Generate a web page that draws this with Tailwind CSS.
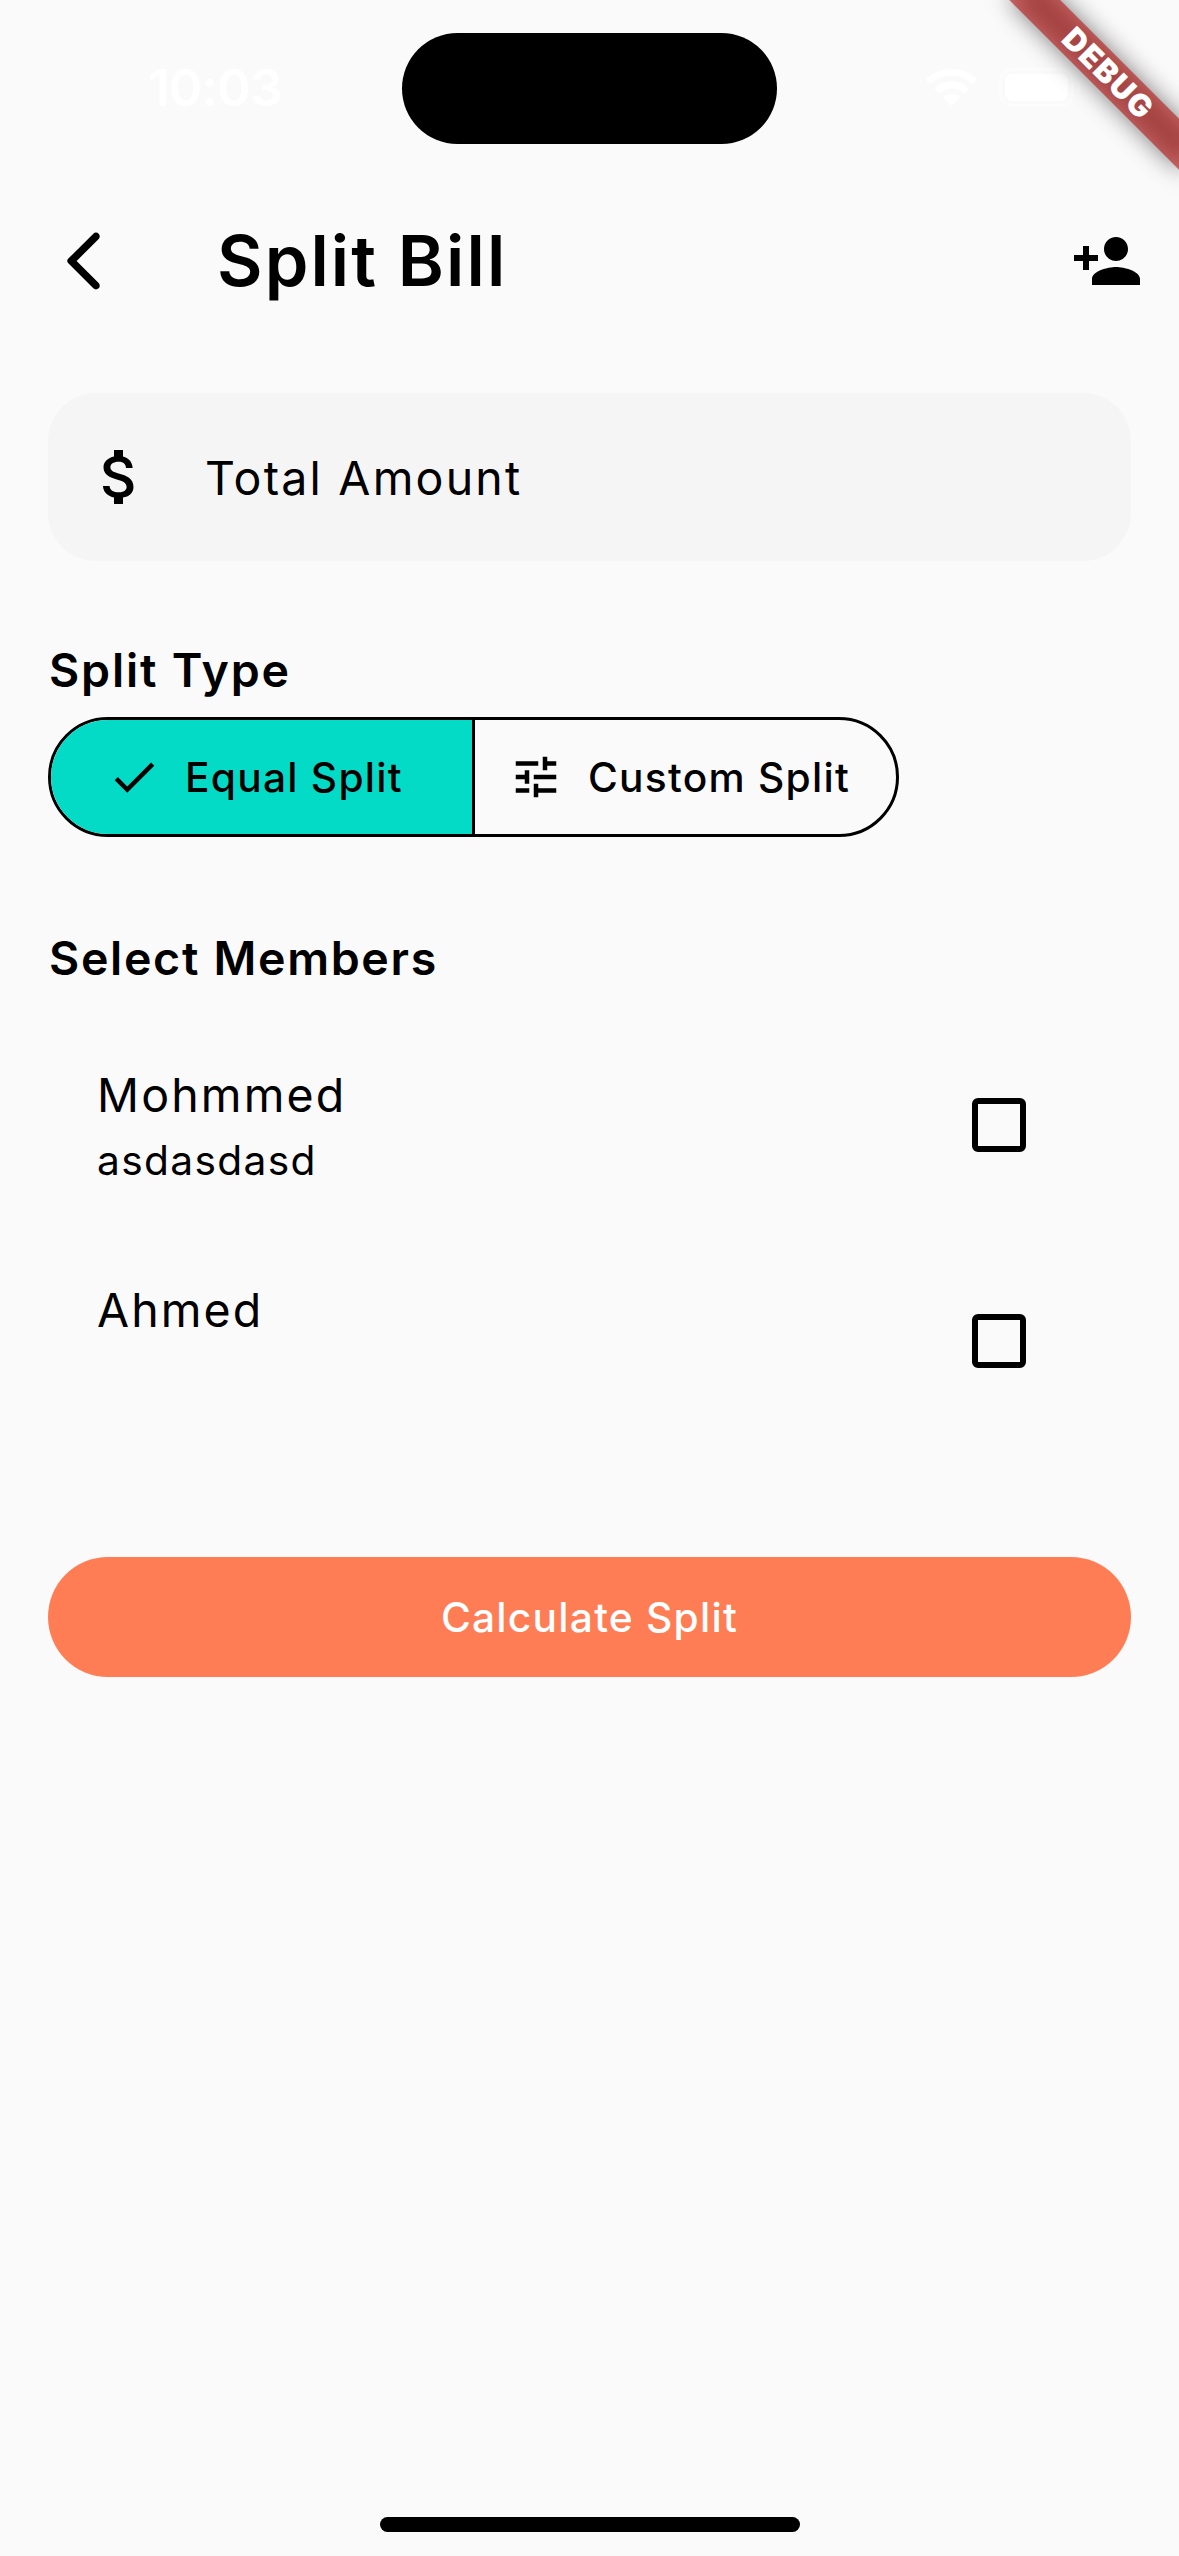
<!DOCTYPE html>
<html lang="en">
<head>
<meta charset="utf-8">
<title>Split Bill</title>
<script src="https://cdn.jsdelivr.net/npm/@tailwindcss/browser@4"></script>
</head>
<body class="bg-[#fafafa]">
<div class="relative flex h-[2556px] w-[1179px] flex-col overflow-hidden bg-[#fafafa] font-['Inter',sans-serif] text-black">

  <!-- Status bar -->
  <div class="flex h-[177px] items-start">
    <div class="mt-[57px] ml-[148px] w-[254px] text-[51px] leading-[61px] font-semibold tracking-[-0.8px] text-white">10:03</div>
    <div class="mt-[33px] h-[111px] w-[375px] rounded-full bg-black"></div>
    <svg class="mt-[69px] ml-[149px] h-[37px] w-[51px]" viewBox="0 0 51 37" fill="#fff">
      <path d="M25.5 0C35.5 0 44 3.6 50.4 9.6c.6.6.6 1.4.1 2l-2.7 2.7c-.5.5-1.3.5-1.9 0C40.3 9.4 33.3 6.7 25.5 6.7S10.7 9.4 5.1 14.3c-.6.5-1.4.5-1.9 0L.5 11.6c-.5-.6-.5-1.4.1-2C7 3.6 15.5 0 25.5 0z"/>
      <path d="M25.5 12.6c6.3 0 11.9 2.2 16.1 6.2.6.6.6 1.3 0 1.9l-3 3c-.5.5-1.2.5-1.8 0-3-2.7-6.9-4.3-11.3-4.3s-8.3 1.600-11.3 4.300c-.6.500-1.300.5-1.800 0l-3-3c-.6-.6-.6-1.300 0-1.900 4.200-4 9.800-6.200 16.100-6.200z"/>
      <path d="M25.5 25c2.9 0 5.4 1 7.400 2.600.6.500.6 1.200.1 1.800l-6.500 6.700c-.6.600-1.400.6-2 0L18 29.400c-.5-.6-.5-1.300.1-1.800 2-1.600 4.500-2.600 7.400-2.600z"/>
    </svg>
    <svg class="mt-[68px] ml-[22px] h-[39px] w-[83px]" viewBox="0 0 83 39" fill="none">
      <rect x="1.5" y="1.5" width="72" height="36" rx="11.5" stroke="#fff" stroke-opacity=".4" stroke-width="3"/>
      <rect x="6" y="6" width="63" height="27" rx="7.5" fill="#fff"/>
      <path d="M78 13.5v12c2.4-1 4-3.300 4-6s-1.600-5-4-6z" fill="#fff" fill-opacity=".5"/>
    </svg>
  </div>

  <!-- App bar -->
  <header class="flex h-[168px] items-center pr-9 pl-12">
    <svg class="size-[72px]" viewBox="0 0 24 24"><path d="M16.880 2.880c-.49-.49-1.280-.49-1.770 0L6.700 11.290c-.39.390-.39 1.020 0 1.410l8.410 8.410c.49.490 1.280.490 1.770 0s.49-1.280 0-1.770L9.540 12l7.350-7.350c.48-.49.480-1.280-.01-1.770z"/></svg>
    <h1 class="ml-[97px] flex-1 text-[70px] leading-[84px] font-[560] tracking-[2.1px]">Split Bill</h1>
    <svg class="size-[72px]" viewBox="0 0 24 24"><path d="M15 12c2.210 0 4-1.790 4-4s-1.790-4-4-4-4 1.790-4 4 1.790 4 4 4zm-9-2V7H4v3H1v2h3v3h2v-3h3v-2H6zm9 4c-2.670 0-8 1.340-8 4v2h16v-2c0-2.660-5.330-4-8-4z"/></svg>
  </header>

  <main class="flex flex-col px-12 pt-12">
    <!-- Amount field -->
    <div class="flex h-[168px] items-center rounded-[48px] bg-[#f5f5f5] pl-9">
      <svg class="size-[72px]" viewBox="0 0 24 24"><path d="M11.800 10.900c-2.270-.59-3-1.200-3-2.150 0-1.090 1.010-1.850 2.700-1.850 1.780 0 2.440.850 2.500 2.100h2.210c-.07-1.720-1.120-3.300-3.210-3.810V3h-3v2.160c-1.940.420-3.500 1.680-3.500 3.610 0 2.310 1.910 3.460 4.700 4.130 2.500.600 3 1.480 3 2.410 0 .690-.49 1.790-2.700 1.790-2.060 0-2.870-.92-2.980-2.100h-2.200c.12 2.190 1.760 3.420 3.680 3.830V21h3v-2.150c1.950-.37 3.500-1.500 3.500-3.550 0-2.840-2.430-3.810-4.700-4.400z"/></svg>
      <span class="mt-0.5 ml-[49px] text-[46.5px] leading-[60px] font-[370] tracking-[2.2px]">Total Amount</span>
    </div>

    <!-- Split type -->
    <h2 class="mt-[73px] ml-px text-[46.5px] leading-[72px] font-[560] tracking-[1.85px]">Split Type</h2>
    <div class="mt-[11px] flex h-[120px] w-[851px] overflow-hidden rounded-full border-3 border-black text-[40.7px] leading-[54px] font-medium tracking-[1.25px]">
      <div class="flex w-[424px] items-center gap-6 border-r-3 border-black bg-[#03dbc7] pl-14">
        <svg class="size-[54px]" viewBox="0 0 24 24"><path d="M9 16.170L4.830 12l-1.420 1.410L9 19 21 7l-1.410-1.410z"/></svg>
        <span class="mt-px">Equal Split</span>
      </div>
      <div class="flex flex-1 items-center gap-[25px] pl-[34px]">
        <svg class="size-[54px]" viewBox="0 0 24 24"><path d="M3 17v2h6v-2H3zM3 5v2h10V5H3zm10 16v-2h8v-2h-8v-2h-2v6h2zM7 9v2H3v2h4v2h2V9H7zm14 4v-2H11v2h10zm-6-4h2V7h4V5h-4V3h-2v6z"/></svg>
        <span class="mt-px">Custom Split</span>
      </div>
    </div>

    <!-- Members -->
    <h2 class="mt-[85px] ml-px text-[46.5px] leading-[72px] font-[560] tracking-[1.68px]">Select Members</h2>
    <ul class="mt-[23px]">
      <li class="flex h-[216px] items-center justify-between pr-[105px] pl-[49px]">
        <div class="h-[132px] font-[370]">
          <div class="text-[46.5px] leading-[72px] tracking-[2.15px]">Mohmmed</div>
          <div class="text-[40.7px] leading-[60px] tracking-[1.33px]">asdasdasd</div>
        </div>
        <div class="size-[54px] rounded-md border-6 border-black"></div>
      </li>
      <li class="flex h-[216px] items-center justify-between pr-[105px] pl-[49px]">
        <div class="h-[134px] font-[370]">
          <div class="text-[46.5px] leading-[72px] tracking-[2.1px]">Ahmed</div>
        </div>
        <div class="size-[54px] rounded-md border-6 border-black"></div>
      </li>
    </ul>

    <button class="mt-[108px] h-[120px] rounded-full bg-[#ff7d54] pt-0.5 text-[40.7px] leading-[54px] font-medium tracking-[1.24px] text-white">Calculate Split</button>
  </main>

  <!-- Home indicator -->
  <div class="mt-auto mb-6 h-[15px] w-[420px] self-center rounded-full bg-black"></div>

  <!-- Debug banner -->
  <div class="absolute top-[84px] left-[1059px] h-9 w-60 origin-[120px_-84px] rotate-45">
    <div class="absolute inset-0 bg-black/50 blur-[12px]"></div>
    <div class="absolute inset-0 flex items-center justify-center bg-[#b71c1c]/63 pl-1 text-[31px] leading-9 font-black tracking-[1.4px] text-white">DEBUG</div>
  </div>
</div>
</body>
</html>
